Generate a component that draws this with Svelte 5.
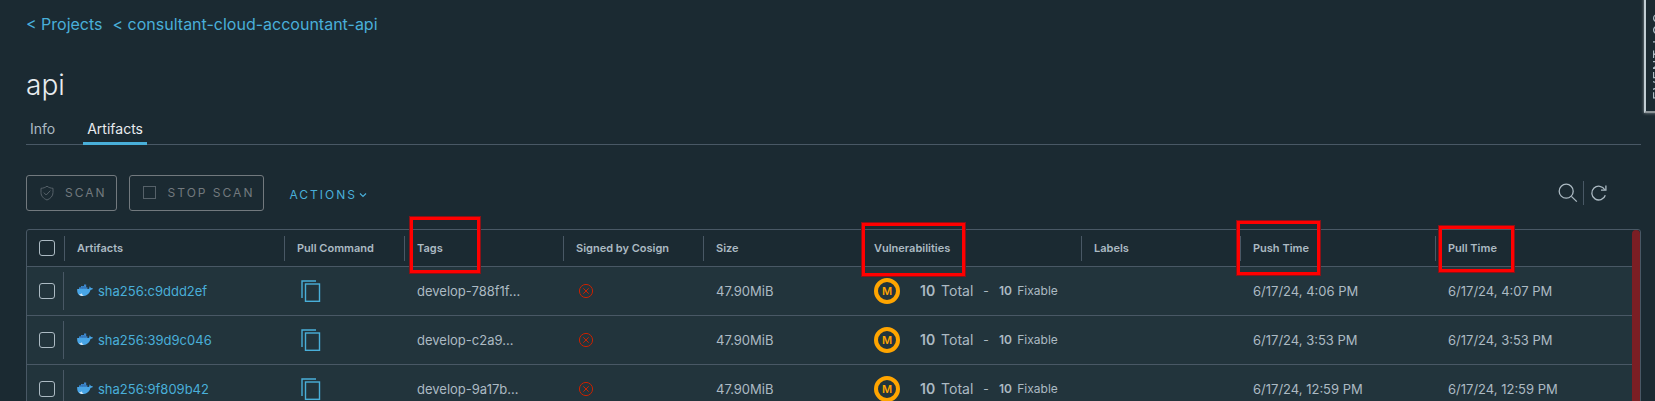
<script>
  const columns = [
    { name: 'Artifacts', width: 220 },
    { name: 'Pull Command', width: 120 },
    { name: 'Tags', width: 159, mark: 'tags' },
    { name: 'Signed by Cosign', width: 140 },
    { name: 'Size', width: 158 },
    { name: 'Vulnerabilities', width: 220, mark: 'vulnerabilities' },
    { name: 'Labels', width: 159 },
    { name: 'Push Time', width: 195, mark: 'push' },
    { name: 'Pull Time', width: 197, mark: 'pull' }
  ];

  const artifacts = [
    { digest: 'sha256:c9ddd2ef', tag: 'develop-788f1f…', push: '6/17/24, 4:06 PM', pull: '6/17/24, 4:07 PM' },
    { digest: 'sha256:39d9c046', tag: 'develop-c2a9…', push: '6/17/24, 3:53 PM', pull: '6/17/24, 3:53 PM' },
    { digest: 'sha256:9f809b42', tag: 'develop-9a17b…', push: '6/17/24, 12:59 PM', pull: '6/17/24, 12:59 PM' }
  ];
</script>

<main>
  <nav class="crumbs">
    <a href="#projects">&lt; Projects</a>
    <a href="#project">&lt; consultant-cloud-accountant-api</a>
  </nav>

  <h1>api</h1>

  <nav class="tabs">
    <a href="#info">Info</a>
    <a href="#artifacts" class="active">Artifacts</a>
  </nav>

  <div class="toolbar">
    <button class="outlined" disabled>
      <svg width="16" height="16" viewBox="0 0 16 16" fill="none" stroke="currentColor" aria-hidden="true">
        <path d="M8 1.2 C6.2 2.6 4.2 3.2 2 3.3 V7.5 C2 11.2 4.6 13.6 8 15 C11.4 13.6 14 11.2 14 7.5 V3.3 C11.8 3.2 9.8 2.6 8 1.2 Z" />
        <path d="M4.8 7.6 L7.2 10 L11.4 5.6" />
      </svg>
      <span>SCAN</span>
    </button>
    <button class="outlined" disabled>
      <svg width="16" height="16" viewBox="0 0 16 16" fill="none" stroke="currentColor" aria-hidden="true">
        <rect x="1.5" y="1.5" width="12" height="12" />
      </svg>
      <span>STOP SCAN</span>
    </button>
    <button class="actions">
      <span>ACTIONS</span>
      <svg width="8" height="8" viewBox="0 0 8 8" fill="none" stroke="currentColor" stroke-width="1.2" aria-hidden="true">
        <path d="M1 2.5 L4 5.5 L7 2.5" />
      </svg>
    </button>
    <div class="tools">
      <button aria-label="Search">
        <svg width="20" height="20" viewBox="0 0 20 20" fill="none" stroke="currentColor" stroke-width="1.3" aria-hidden="true">
          <circle cx="8.2" cy="8.2" r="7" />
          <path d="M13.4 13.4 L18.8 18.6" />
        </svg>
      </button>
      <button class="refresh" aria-label="Refresh">
        <svg width="18" height="18" viewBox="0 0 18 18" fill="none" stroke="currentColor" stroke-width="1.3" aria-hidden="true">
          <path d="M15.3 11.2 A6.9 6.9 0 1 1 14.8 5.8" />
          <path d="M15.9 1.6 V6.1 H11" />
        </svg>
      </button>
    </div>
  </div>

  <div class="grid">
    <table>
      <colgroup>
        <col style:width="37px" />
        {#each columns as column}
          <col style:width="{column.width}px" />
        {/each}
      </colgroup>
      <thead>
        <tr>
          <th class="pick"><input type="checkbox" aria-label="Select all" /></th>
          {#each columns as column}
            <th>
              {column.name}
              {#if column.mark}<i class="mark {column.mark}"></i>{/if}
            </th>
          {/each}
        </tr>
      </thead>
      <tbody>
        {#each artifacts as artifact}
          <tr>
            <td class="pick"><input type="checkbox" aria-label={artifact.digest} /></td>
            <td>
              <div class="artifact">
                <svg width="16" height="13" viewBox="0 0 16 13" aria-hidden="true">
                  <path fill="#3f87cc" d="M2 3.4 H4 V2 H7 V0.6 H9.2 V3.4 H10.4 V5 H2 Z" />
                  <path fill="#48a5e6" d="M0.2 4.9 H11.4 C12.4 4.9 12.7 3.8 12.3 2.4 C13.3 2.8 13.8 3.4 13.9 4.1 C14.7 3.9 15.4 4.1 16 4.5 C15.5 5.5 14.6 5.9 13.5 5.9 C12.2 9.9 9.4 12 5.5 12 C2 12 -0.2 9.6 0.2 4.9 Z" />
                  <path fill="#cfe5f5" d="M2 10.2 C3.2 10.4 4.3 10 5 9.2 C5 10.5 5.7 11.4 6.8 11.9 C4.6 12.2 3 11.6 2 10.2 Z" />
                  <path stroke="#2f72b5" stroke-width="0.5" d="M4 3.4 V5 M5.6 2 V5 M7.2 2 V5 M8.8 3.4 V5 M2 3.5 H10.4" />
                </svg>
                <a href="#artifact">{artifact.digest}</a>
              </div>
            </td>
            <td>
              <button class="copy" aria-label="Copy pull command">
                <svg width="20" height="22" viewBox="0 0 20 22" fill="none" stroke="currentColor" aria-hidden="true">
                  <path d="M1 18 V1 H15" stroke-width="1.4" />
                  <rect x="4.5" y="4" width="14" height="17.3" stroke-width="1.4" />
                </svg>
              </button>
            </td>
            <td>{artifact.tag}</td>
            <td>
              <svg class="unsigned" width="16" height="16" viewBox="0 0 16 16" fill="none" stroke="currentColor" role="img" aria-label="Not signed">
                <circle cx="8" cy="8" r="6.6" />
                <path d="M5.3 5.3 L10.7 10.7 M10.7 5.3 L5.3 10.7" />
              </svg>
            </td>
            <td>47.90MiB</td>
            <td>
              <div class="vulnerability">
                <span class="severity">M</span>
                <span class="total"><b>10</b> Total</span>
                <span class="dash">-</span>
                <span class="fixable"><b>10</b> Fixable</span>
              </div>
            </td>
            <td></td>
            <td>{artifact.push}</td>
            <td>{artifact.pull}</td>
          </tr>
        {/each}
      </tbody>
    </table>
    <div class="scrollbar"></div>
  </div>

  <aside><span>EVENT LOG</span></aside>
</main>

<style>
  :global(body) {
    background: #1b2a32;
    overflow: hidden;
  }

  main {
    box-sizing: border-box;
    height: 100vh;
    overflow: hidden;
    padding: 12px 14px 0 26px;
    color: #acbac3;
    font: 13px/24px Inter, sans-serif;
  }

  a {
    color: #49afd9;
    text-decoration: none;
  }

  button {
    padding: 0;
    border: 0;
    background: none;
    color: inherit;
    font: inherit;
    letter-spacing: inherit;
  }

  svg {
    display: block;
    flex: none;
  }

  .crumbs {
    display: flex;
    gap: 10px;
    font-size: 16px;
  }

  h1 {
    margin: 33px 0 0;
    color: #e9ecef;
    font-size: 28px;
    font-weight: 300;
    line-height: 32px;
  }

  .tabs {
    display: flex;
    gap: 24px;
    margin-top: 15px;
    font-size: 14px;
    box-shadow: inset 0 -1px #495865;
  }

  .tabs a {
    padding: 1px 4px 4px;
    color: #acbac3;
  }

  .tabs .active {
    color: #e9ecef;
    box-shadow: inset 0 -3px #49afd9;
  }

  .toolbar {
    display: flex;
    align-items: center;
    margin-top: 30px;
    font-size: 12px;
    letter-spacing: 2px;
  }

  .outlined {
    display: flex;
    align-items: center;
    gap: 10px;
    box-sizing: border-box;
    height: 36px;
    margin-right: 12px;
    padding: 0 9px 0 12px;
    border: 1px solid #72797e;
    border-radius: 3px;
    color: #72797e;
  }

  .outlined svg {
    color: #566169;
  }

  .actions {
    display: flex;
    align-items: center;
    gap: 2px;
    margin-left: 13px;
    padding-top: 3px;
    color: #49afd9;
  }

  .tools {
    display: flex;
    margin: 0 33px 0 auto;
  }

  .tools button {
    display: flex;
    align-items: center;
    height: 24px;
    padding-right: 5px;
  }

  .tools .refresh {
    padding: 0 0 0 6px;
    border-left: 1px solid #495865;
  }

  .grid {
    display: flex;
    margin-top: 18px;
    border: 1px solid #495865;
    border-radius: 3px 3px 0 0;
  }

  table {
    flex: 1;
    width: 0;
    table-layout: fixed;
    border-collapse: separate;
    border-spacing: 0;
  }

  th,
  td {
    position: relative;
    box-sizing: border-box;
    padding: 0 0 0 13px;
    border-bottom: 1px solid #495865;
    text-align: left;
    white-space: nowrap;
  }

  th {
    height: 37px;
    font-size: 11px;
    font-weight: 600;
  }

  td {
    height: 49px;
    padding-bottom: 1px;
    background: #22343c;
  }

  th + th {
    background: linear-gradient(#495865, #495865) 0 50% / 1px 25px no-repeat;
  }

  td.pick {
    background: linear-gradient(#495865, #495865) 100% 50% / 1px 38px no-repeat #22343c;
  }

  .pick {
    padding-left: 12px;
  }

  input {
    display: block;
    appearance: none;
    box-sizing: border-box;
    width: 16px;
    height: 16px;
    margin: 0;
    border: 1px solid #acbac3;
    border-radius: 3px;
  }

  .artifact {
    display: flex;
    align-items: center;
    gap: 5px;
  }

  .copy {
    display: block;
    margin-left: 4px;
    color: #49afd9;
  }

  .unsigned {
    margin-left: 2px;
    color: #c92100;
  }

  .vulnerability {
    display: flex;
    align-items: center;
  }

  .severity {
    box-sizing: border-box;
    width: 26px;
    height: 26px;
    border: 4px solid #ffa500;
    border-radius: 50%;
    color: #ffa500;
    font-size: 11px;
    font-weight: 600;
    line-height: 18px;
    text-align: center;
  }

  b {
    margin-right: 2px;
    font-weight: 600;
  }

  .total {
    margin-left: 20px;
    font-size: 14px;
  }

  .dash {
    margin: 0 10px;
    font-size: 12px;
  }

  .fixable {
    font-size: 12px;
  }

  .scrollbar {
    width: 8px;
    border-radius: 4px 4px 0 0;
    background: #7b1e24;
  }

  .mark {
    position: absolute;
    z-index: 1;
    box-sizing: border-box;
    border: 4px solid #ff0000;
    outline: 1px solid #8a1218;
    outline-offset: -1px;
  }

  .tags {
    left: 5px;
    top: -14px;
    width: 72px;
    height: 58px;
  }

  .vulnerabilities {
    left: 0;
    top: -8px;
    width: 105px;
    height: 55px;
  }

  .push {
    left: -4px;
    top: -10px;
    width: 85px;
    height: 56px;
  }

  .pull {
    left: 3px;
    top: -5px;
    width: 77px;
    height: 48px;
  }

  aside {
    position: fixed;
    top: -8px;
    right: -26px;
    display: flex;
    align-items: center;
    padding: 18px 10px 11px 3px;
    border: 2px solid #c1cdd4;
    border-bottom-color: #8c9498;
    background: #1b2a32;
    box-shadow: 0 0 3px #8c9498;
    font-size: 14px;
    line-height: 20px;
  }

  aside span {
    writing-mode: vertical-rl;
    transform: rotate(180deg);
    letter-spacing: 1px;
  }
</style>
